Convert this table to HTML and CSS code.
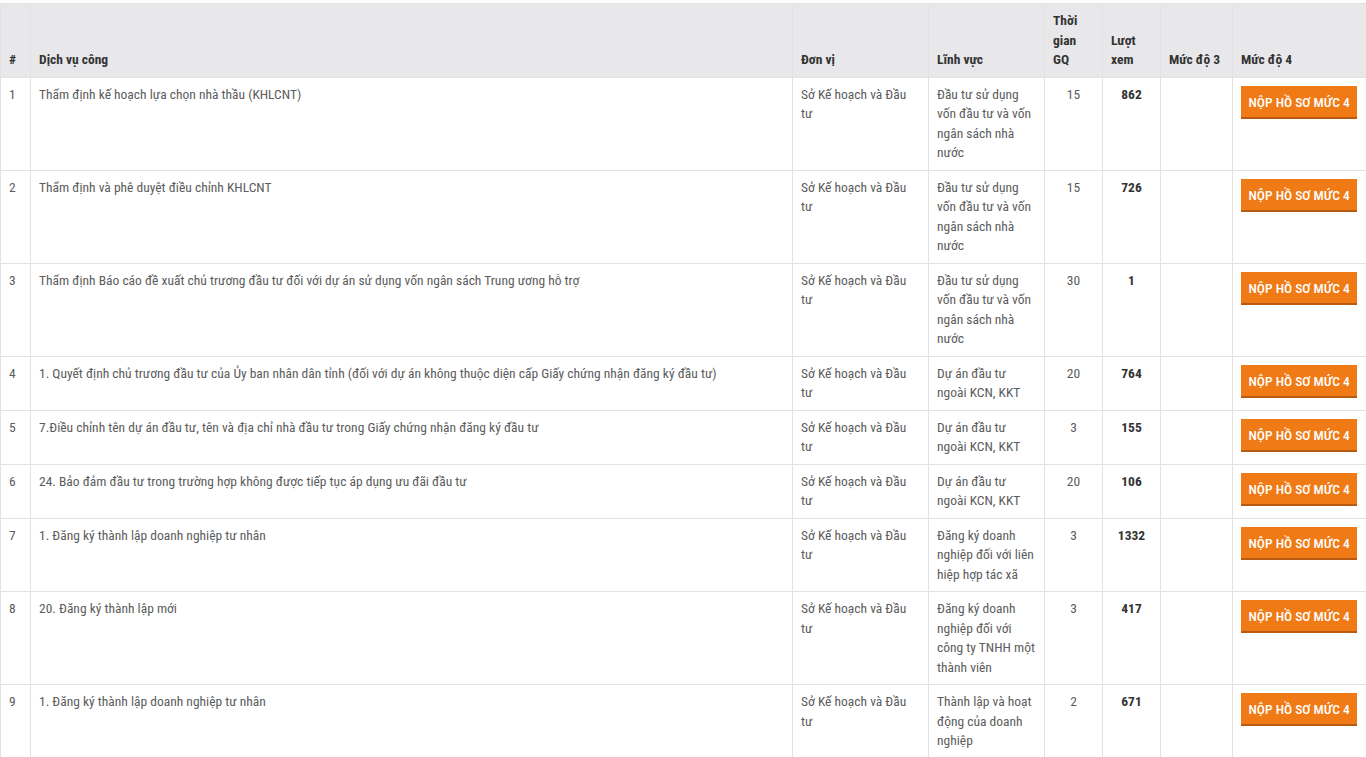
FILE: index.html
```html
<!DOCTYPE html>
<html lang="vi">
<head>
<meta charset="utf-8">
<title>Dịch vụ công</title>
<link rel="stylesheet" href="styles.css">
</head>
<body>
<table class="dvc">
  <colgroup>
    <col class="c-stt"><col class="c-name"><col class="c-unit"><col class="c-field"><col class="c-time"><col class="c-view"><col class="c-m3"><col class="c-m4">
  </colgroup>
  <thead>
    <tr>
      <th>#</th><th>Dịch vụ công</th><th>Đơn vị</th><th>Lĩnh vực</th><th>Thời gian GQ</th><th>Lượt xem</th><th>Mức độ 3</th><th>Mức độ 4</th>
    </tr>
  </thead>
  <tbody>
    <tr><td>1</td><td>Thẩm định kế hoạch lựa chọn nhà thầu (KHLCNT)</td><td>Sở Kế hoạch và Đầu tư</td><td>Đầu tư sử dụng vốn đầu tư và vốn ngân sách nhà nước</td><td class="ct">15</td><td class="ct b">862</td><td></td><td><a class="btn" href="#">Nộp hồ sơ mức 4</a></td></tr>
    <tr><td>2</td><td>Thẩm định và phê duyệt điều chỉnh KHLCNT</td><td>Sở Kế hoạch và Đầu tư</td><td>Đầu tư sử dụng vốn đầu tư và vốn ngân sách nhà nước</td><td class="ct">15</td><td class="ct b">726</td><td></td><td><a class="btn" href="#">Nộp hồ sơ mức 4</a></td></tr>
    <tr><td>3</td><td>Thẩm định Báo cáo đề xuất chủ trương đầu tư đối với dự án sử dụng vốn ngân sách Trung ương hỗ trợ</td><td>Sở Kế hoạch và Đầu tư</td><td>Đầu tư sử dụng vốn đầu tư và vốn ngân sách nhà nước</td><td class="ct">30</td><td class="ct b">1</td><td></td><td><a class="btn" href="#">Nộp hồ sơ mức 4</a></td></tr>
    <tr><td>4</td><td>1. Quyết định chủ trương đầu tư của Ủy ban nhân dân tỉnh (đối với dự án không thuộc diện cấp Giấy chứng nhận đăng ký đầu tư)</td><td>Sở Kế hoạch và Đầu tư</td><td>Dự án đầu tư ngoài KCN, KKT</td><td class="ct">20</td><td class="ct b">764</td><td></td><td><a class="btn" href="#">Nộp hồ sơ mức 4</a></td></tr>
    <tr><td>5</td><td>7.Điều chỉnh tên dự án đầu tư, tên và địa chỉ nhà đầu tư trong Giấy chứng nhận đăng ký đầu tư</td><td>Sở Kế hoạch và Đầu tư</td><td>Dự án đầu tư ngoài KCN, KKT</td><td class="ct">3</td><td class="ct b">155</td><td></td><td><a class="btn" href="#">Nộp hồ sơ mức 4</a></td></tr>
    <tr><td>6</td><td>24. Bảo đảm đầu tư trong trường hợp không được tiếp tục áp dụng ưu đãi đầu tư</td><td>Sở Kế hoạch và Đầu tư</td><td>Dự án đầu tư ngoài KCN, KKT</td><td class="ct">20</td><td class="ct b">106</td><td></td><td><a class="btn" href="#">Nộp hồ sơ mức 4</a></td></tr>
    <tr><td>7</td><td>1. Đăng ký thành lập doanh nghiệp tư nhân</td><td>Sở Kế hoạch và Đầu tư</td><td>Đăng ký doanh nghiệp đối với liên hiệp hợp tác xã</td><td class="ct">3</td><td class="ct b">1332</td><td></td><td><a class="btn" href="#">Nộp hồ sơ mức 4</a></td></tr>
    <tr><td>8</td><td>20. Đăng ký thành lập mới</td><td>Sở Kế hoạch và Đầu tư</td><td>Đăng ký doanh nghiệp đối với công ty TNHH một thành viên</td><td class="ct">3</td><td class="ct b">417</td><td></td><td><a class="btn" href="#">Nộp hồ sơ mức 4</a></td></tr>
    <tr><td>9</td><td>1. Đăng ký thành lập doanh nghiệp tư nhân</td><td>Sở Kế hoạch và Đầu tư</td><td>Thành lập và hoạt động của doanh nghiệp</td><td class="ct">2</td><td class="ct b">671</td><td></td><td><a class="btn" href="#">Nộp hồ sơ mức 4</a></td></tr>
  </tbody>
</table>
</body>
</html>
```
FILE: styles.css
```css
html, body {
  margin: 0;
  padding: 0;
  background: #fff;
}
body {
  font-family: "Roboto Condensed", "Liberation Sans Narrow", Roboto, sans-serif;
  font-stretch: condensed;
  font-size: 13.5px;
  line-height: 19.5px;
  color: #5c5c5c;
}
.dvc {
  margin-top: 3px;
  width: 1367px;
  border-collapse: collapse;
  table-layout: fixed;
}
.c-stt { width: 30px; }
.c-name { width: 762px; }
.c-unit { width: 136px; }
.c-field { width: 116px; }
.c-time { width: 58px; }
.c-view { width: 58px; }
.c-m3 { width: 72px; }
.c-m4 { width: 135px; }
.dvc th, .dvc td {
  border: 1px solid #e2e2e2;
  padding: 7px 8px;
  vertical-align: top;
  text-align: left;
}
.dvc th {
  background: #e8e8ea;
  color: #333;
  font-weight: 700;
  vertical-align: bottom;
}
.dvc td.ct { text-align: center; }
.dvc td.b { font-weight: 700; color: #333; }
.btn {
  display: inline-block;
  vertical-align: top;
  margin-top: 1px;
  background: #f07b16;
  color: #fff;
  text-transform: uppercase;
  text-decoration: none;
  font-weight: 500;
  font-size: 13.5px;
  line-height: 18px;
  padding: 7px 7.5px 6px;
  border-bottom: 2px solid #b85a10;
  white-space: nowrap;
}
```
